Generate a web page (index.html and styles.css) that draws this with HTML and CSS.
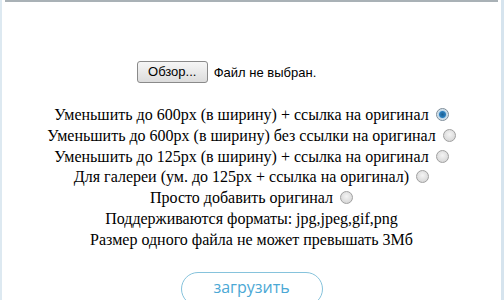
FILE: index.html
```html
<!DOCTYPE html>
<html>
<head>
<meta charset="utf-8">
<link rel="stylesheet" href="styles.css">
</head>
<body>
<div class="frame">
  <div class="topline"></div>
  <div class="panel">
    <div class="filerow">
      <span class="browse">Обзор...</span>
      <span class="nofile">Файл не выбран.</span>
    </div>
    <div class="options">
      <div class="line">Уменьшить до 600px (в ширину) + ссылка на оригинал <span class="radio checked"></span></div>
      <div class="line">Уменьшить до 600px (в ширину) без ссылки на оригинал <span class="radio"></span></div>
      <div class="line">Уменьшить до 125px (в ширину) + ссылка на оригинал <span class="radio"></span></div>
      <div class="line">Для галереи (ум. до 125px + ссылка на оригинал) <span class="radio"></span></div>
      <div class="line">Просто добавить оригинал <span class="radio"></span></div>
      <div class="line">Поддерживаются форматы: jpg,jpeg,gif,png</div>
      <div class="line">Размер одного файла не может превышать 3Мб</div>
    </div>
    <div class="submitrow">
      <span class="submit">загрузить</span>
    </div>
  </div>
</div>
</body>
</html>
```
FILE: styles.css
```css
html, body {
  margin: 0;
  padding: 0;
  background: #ffffff;
}
.frame {
  width: 504px;
  height: 300px;
  overflow: hidden;
  box-sizing: border-box;
  border-left: 2px solid #dde9f1;
  border-right: 3px solid #d6e4ee;
  position: relative;
}
.topline {
  height: 2px;
  margin: 0 3px 0 3px;
  background: #a9b1b6;
}
.panel {
  display: flex;
  flex-direction: column;
  align-items: center;
}
.filerow {
  margin-top: 59px;
  margin-left: -50px;
  display: flex;
  align-items: center;
  font-family: "Liberation Sans", Arial, sans-serif;
  font-size: 13px;
  color: #000;
}
.browse {
  display: inline-block;
  box-sizing: border-box;
  width: 71px;
  height: 22px;
  line-height: 20px;
  text-align: center;
  border: 1px solid #8a8a8a;
  border-radius: 3px;
  background: linear-gradient(#f6f6f6, #dcdcdc);
  font-size: 13px;
}
.nofile {
  margin-left: 6px;
}
.options {
  margin-top: 22px;
  font-family: "Times New Roman", "Liberation Serif", "Noto Serif", "DejaVu Serif", serif;
  font-size: 16px;
  color: #000;
  text-align: center;
  line-height: 20.8px;
}
.line {
  display: block;
  text-align: center;
}
.radio {
  display: inline-block;
  vertical-align: -1px;
  width: 11px;
  height: 11px;
  border-radius: 50%;
  border: 1px solid #a0a0a0;
  background: radial-gradient(circle at 50% 40%, #f4f4f4, #cfcfcf);
  margin-left: 3px;
}
.radio.checked {
  border-color: #7d8c98;
  background: radial-gradient(circle, #1b5e8f 0, #2b7fbf 3px, #bcd6e8 4px, #e8eef2 6px);
}
.submitrow {
  margin-top: 21px;
}
.submit {
  display: inline-block;
  box-sizing: border-box;
  width: 142px;
  height: 34px;
  border: 1px solid #86c3dc;
  border-radius: 17px;
  text-align: center;
  line-height: 28px;
  font-family: "Open Sans", "Noto Sans", sans-serif;
  font-size: 16px;
  color: #4ba8d5;
}
```
